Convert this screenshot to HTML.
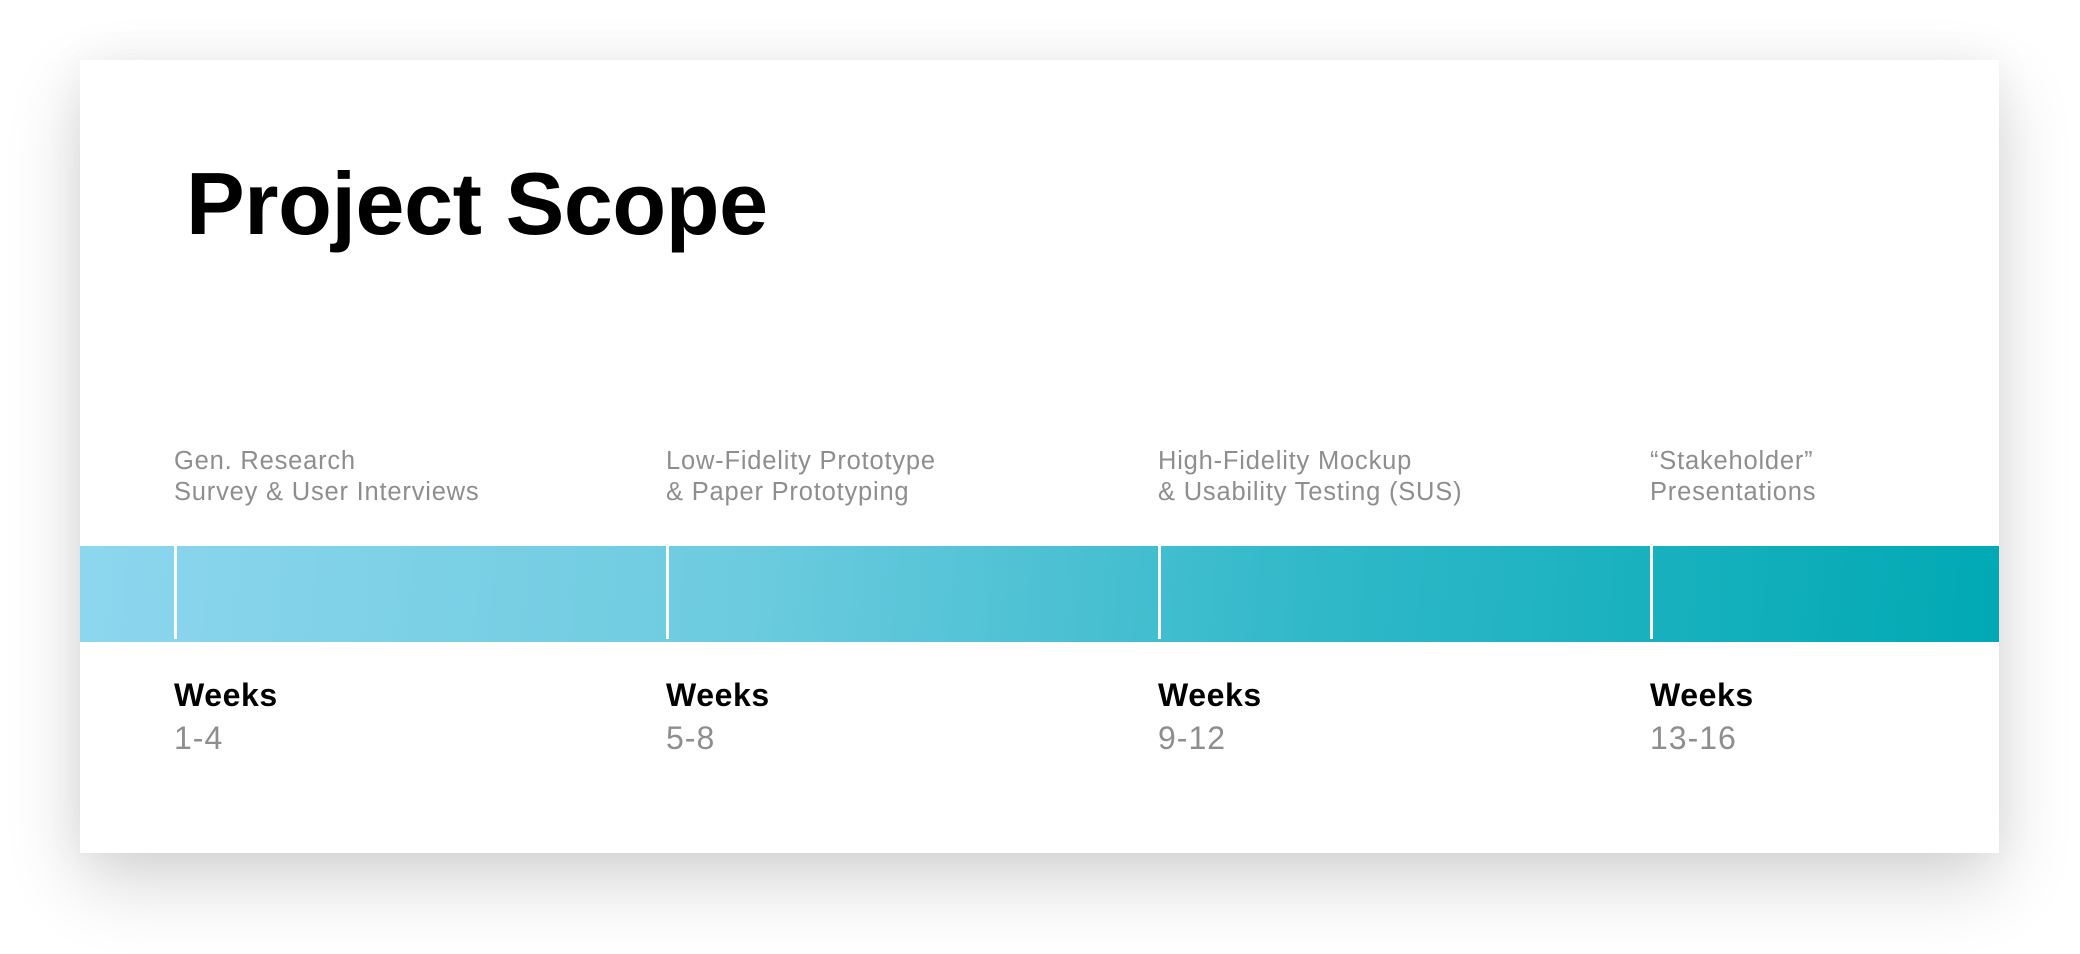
<!DOCTYPE html>
<html><head><meta charset="utf-8"><style>
html,body{margin:0;padding:0;width:2080px;height:954px;background:#fff;overflow:hidden;font-family:"Liberation Sans",sans-serif;}
.card{position:absolute;left:80px;top:60px;width:1919px;height:793px;background:#fff;box-shadow:0 30px 70px rgba(0,0,0,0.16),0 0 40px rgba(0,0,0,0.05);}
.title{position:absolute;left:186px;top:149px;font-size:88px;font-weight:bold;color:#000;letter-spacing:-0.4px;line-height:110px;}
.lbl{position:absolute;top:446px;font-size:25.5px;line-height:31px;color:#8e8e8e;white-space:nowrap;letter-spacing:0.8px;}
.bar{position:absolute;left:80px;top:546px;width:1919px;height:96px;background:linear-gradient(95deg,#8dd6ee 0%,#6ccbdf 35%,#2fb8c8 65%,#00a9b4 100%);}
.div{position:absolute;top:546px;width:3px;height:93px;background:#fff;}
.wk{position:absolute;top:676px;font-size:32px;font-weight:bold;color:#000;line-height:38px;letter-spacing:0.6px;}
.num{position:absolute;top:719px;font-size:32px;color:#8e8e8e;line-height:38px;letter-spacing:1px;}
</style></head><body>
<div class="card"></div>
<div class="title">Project Scope</div>
<div class="lbl" style="left:174px">Gen. Research<br>Survey &amp; User Interviews</div>
<div class="lbl" style="left:666px">Low-Fidelity Prototype<br>&amp; Paper Prototyping</div>
<div class="lbl" style="left:1158px">High-Fidelity Mockup<br>&amp; Usability Testing (SUS)</div>
<div class="lbl" style="left:1650px">“Stakeholder”<br>Presentations</div>
<div class="bar"></div>
<div class="div" style="left:174px"></div>
<div class="div" style="left:666px"></div>
<div class="div" style="left:1158px"></div>
<div class="div" style="left:1650px"></div>
<div class="wk" style="left:174px">Weeks</div><div class="num" style="left:174px">1-4</div>
<div class="wk" style="left:666px">Weeks</div><div class="num" style="left:666px">5-8</div>
<div class="wk" style="left:1158px">Weeks</div><div class="num" style="left:1158px">9-12</div>
<div class="wk" style="left:1650px">Weeks</div><div class="num" style="left:1650px">13-16</div>
</body></html>
